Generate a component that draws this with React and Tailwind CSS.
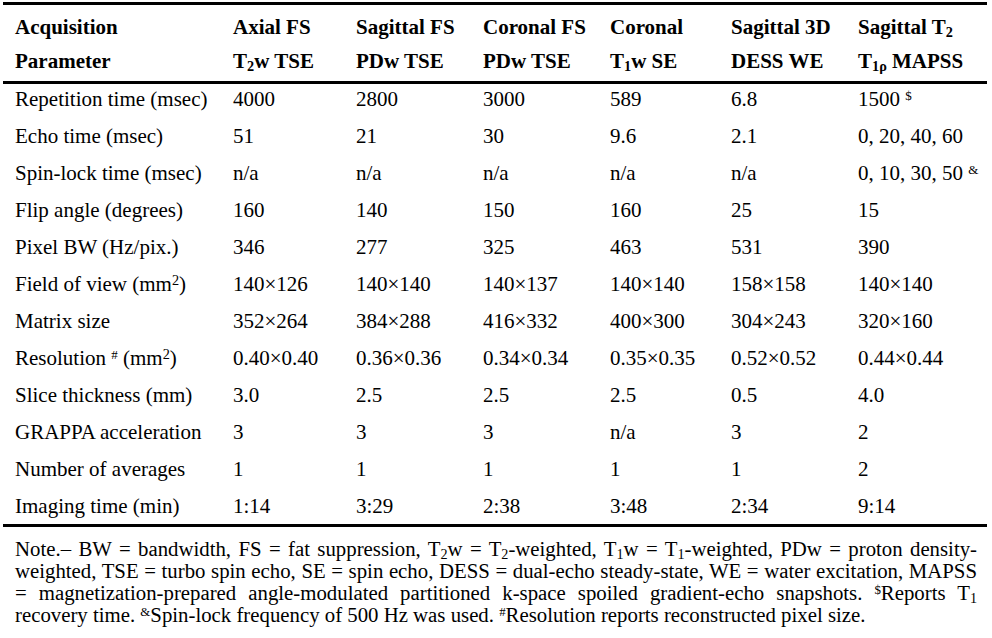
const cols = 'grid grid-cols-[218px_123px_127px_127px_121px_127px_1fr]'

const sb = s => <sub className="text-[0.68em] bottom-[-0.18em]">{s}</sub>

const header = [
  ['Acquisition', 'Parameter'],
  ['Axial FS', <>T{sb('2')}w TSE</>],
  ['Sagittal FS', 'PDw TSE'],
  ['Coronal FS', 'PDw TSE'],
  ['Coronal', <>T{sb('1')}w SE</>],
  ['Sagittal 3D', 'DESS WE'],
  [<>Sagittal T{sb('2')}</>, <>T{sb('1ρ')} MAPSS</>],
]

const sup = s => <sup className="text-[0.62em]">{s}</sup>
const sq = <sup className="text-[0.68em] top-[-0.45em]">2</sup>

const rows = [
  ['Repetition time (msec)', '4000', '2800', '3000', '589', '6.8', <>1500 {sup('$')}</>],
  ['Echo time (msec)', '51', '21', '30', '9.6', '2.1', '0, 20, 40, 60'],
  ['Spin-lock time (msec)', 'n/a', 'n/a', 'n/a', 'n/a', 'n/a', <>0, 10, 30, 50 {sup('&')}</>],
  ['Flip angle (degrees)', '160', '140', '150', '160', '25', '15'],
  ['Pixel BW (Hz/pix.)', '346', '277', '325', '463', '531', '390'],
  [<>Field of view (mm{sq})</>, '140×126', '140×140', '140×137', '140×140', '158×158', '140×140'],
  ['Matrix size', '352×264', '384×288', '416×332', '400×300', '304×243', '320×160'],
  [<>Resolution {sup('#')} (mm{sq})</>, '0.40×0.40', '0.36×0.36', '0.34×0.34', '0.35×0.35', '0.52×0.52', '0.44×0.44'],
  ['Slice thickness (mm)', '3.0', '2.5', '2.5', '2.5', '0.5', '4.0'],
  ['GRAPPA acceleration', '3', '3', '3', 'n/a', '3', '2'],
  ['Number of averages', '1', '1', '1', '1', '1', '2'],
  ['Imaging time (min)', '1:14', '3:29', '2:38', '3:48', '2:34', '9:14'],
]

export default function App() {
  return (
    <div className="w-[992px] h-[638px] bg-white text-black font-[family-name:Liberation_Serif,Times_New_Roman,serif] text-[21px] overflow-hidden">
      <div className="ml-[3px] w-[984px] pt-[2px]">
        {/* header */}
        <div className={`${cols} border-y-[3px] border-black pl-[12px] pt-[5px] pb-[3px] leading-[34px] font-bold`}>
          {header.map((h, i) => (
            <div key={i} className="whitespace-nowrap">
              <div>{h[0]}</div>
              <div>{h[1]}</div>
            </div>
          ))}
        </div>

        {/* body */}
        <div className="border-b-[3px] border-black">
          {rows.map((r, i) => (
            <div
              key={i}
              className={`${cols} pl-[12px] pt-[3px] leading-[24px] ${i === rows.length - 1 ? 'h-[33px]' : 'h-[37px]'}`}
            >
              {r.map((c, j) => (
                <div key={j} className="whitespace-nowrap">{c}</div>
              ))}
            </div>
          ))}
        </div>

        <p className="mt-[11px] pl-[12px] pr-[10px] text-[20.8px] leading-[22px] text-justify">
          Note.– BW = bandwidth, FS = fat suppression, T{sb('2')}w = T{sb('2')}-weighted, T{sb('1')}w = T{sb('1')}-weighted, PDw = proton density-weighted, TSE = turbo spin echo, SE = spin echo, DESS = dual-echo steady-state, WE = water excitation, MAPSS = magnetization-prepared angle-modulated partitioned k-space spoiled gradient-echo snapshots. {sup('$')}Reports T{sb('1')} recovery time. {sup('&')}Spin-lock frequency of 500 Hz was used. {sup('#')}Resolution reports reconstructed pixel size.
        </p>
      </div>
    </div>
  )
}
